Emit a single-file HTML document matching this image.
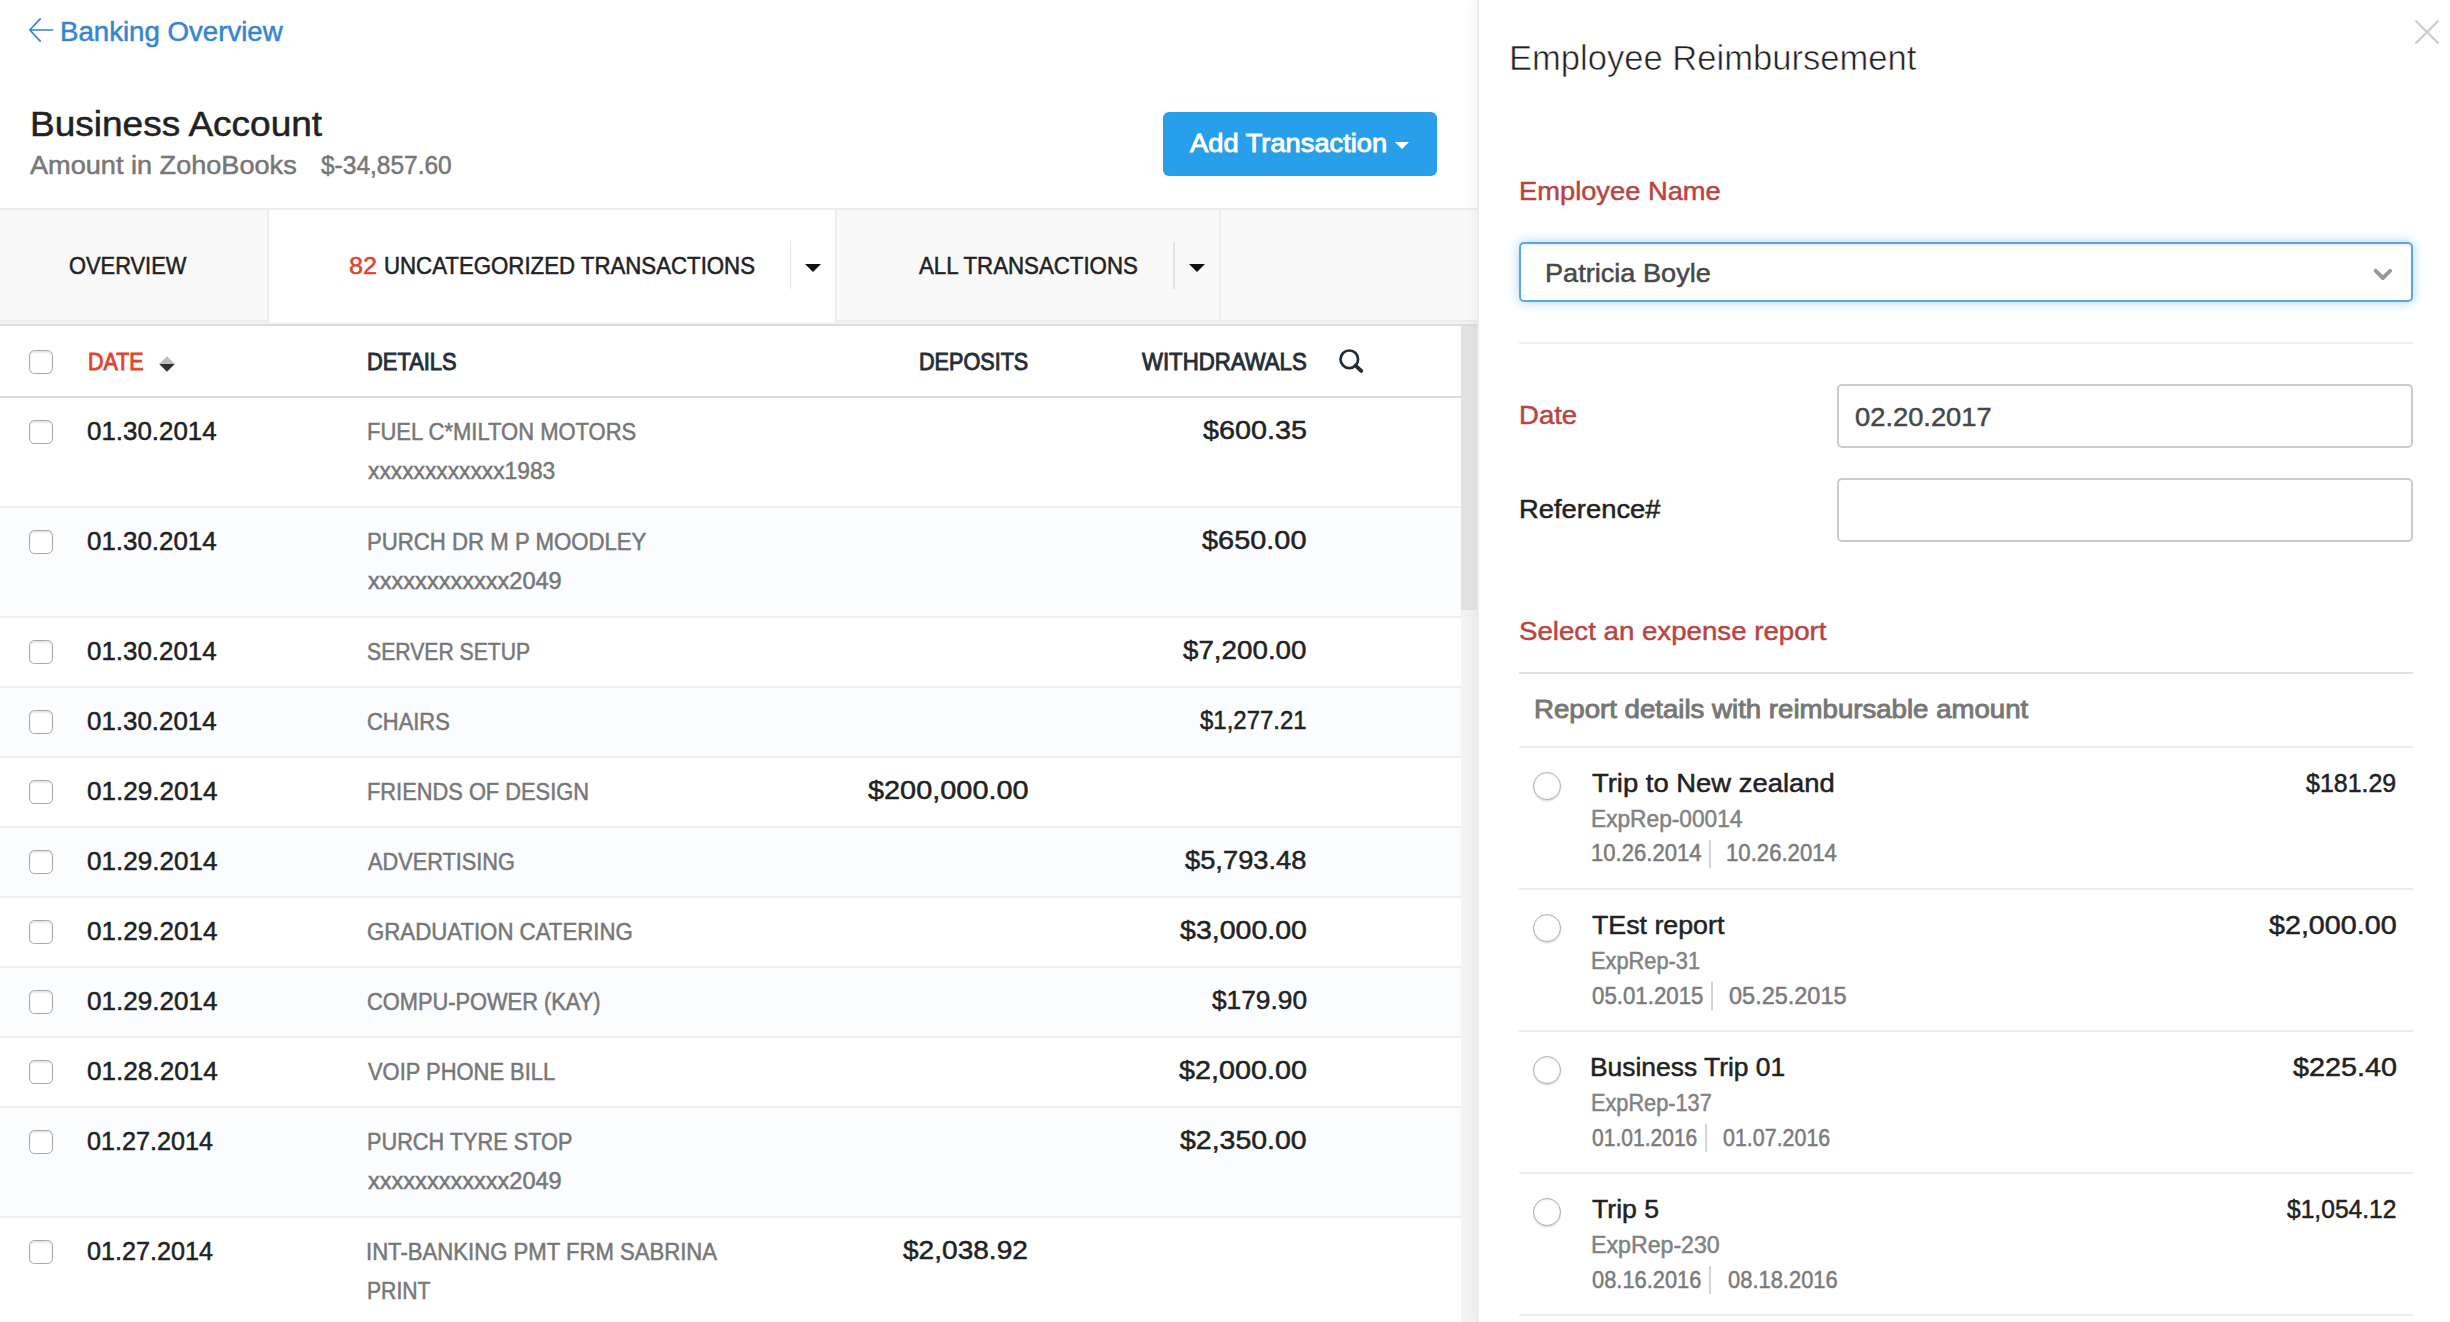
<!DOCTYPE html>
<html><head><meta charset="utf-8"><title>Business Account</title>
<style>
html,body{margin:0;padding:0;}
html{width:2450px;height:1322px;overflow:hidden;background:#fff;}
#r{position:absolute;left:0;top:0;width:2450px;height:1322px;overflow:hidden;}
body{width:2450px;height:1322px;position:relative;overflow:hidden;background:#fff;font-family:"Liberation Sans",sans-serif;}
#r>div,#r>svg,#r>span{position:absolute;display:block;}
#r>span{white-space:pre;line-height:1;transform-origin:0 0;}
</style></head><body><div id="r">
<svg style="left:26px;top:16px" width="30" height="28" viewBox="0 0 30 28"><path d="M26.6 14 H4 M14.2 2.9 L3.8 14 L14.2 25.1" fill="none" stroke="#3585d2" stroke-width="1.7" stroke-linecap="round" stroke-linejoin="round"/></svg>
<div style="left:1163px;top:112px;width:274px;height:64px;background:#27a0e9;border-radius:6px;"></div>
<div style="left:1395.4px;top:142.2px;width:0;height:0;border-left:7.7px solid transparent;border-right:7.7px solid transparent;border-top:7.8px solid #fff;"></div>
<div style="left:0px;top:208px;width:1477px;height:2px;background:#ececec;"></div>
<div style="left:0px;top:210px;width:1477px;height:110px;background:#f9f9f9;"></div>
<div style="left:0px;top:320px;width:1477px;height:2px;background:#ededed;"></div>
<div style="left:269px;top:210px;width:566px;height:112px;background:#fff;"></div>
<div style="left:267px;top:210px;width:2px;height:112px;background:#ededed;"></div>
<div style="left:835px;top:210px;width:2px;height:112px;background:#ededed;"></div>
<div style="left:1219px;top:210px;width:2px;height:112px;background:#ededed;"></div>
<div style="left:0px;top:322px;width:1477px;height:2px;background:#f4f4f4;"></div>
<div style="left:0px;top:324px;width:1477px;height:2px;background:#dddddd;"></div>
<div style="left:789.5px;top:242px;width:1.5px;height:47px;background:#e4e4e4;"></div>
<div style="left:1173px;top:242px;width:1.5px;height:47px;background:#e4e4e4;"></div>
<div style="left:805px;top:264px;width:0;height:0;border-left:8px solid transparent;border-right:8px solid transparent;border-top:8px solid #111;"></div>
<div style="left:1189px;top:264px;width:0;height:0;border-left:8px solid transparent;border-right:8px solid transparent;border-top:8px solid #111;"></div>
<div style="left:29px;top:350px;width:24px;height:24px;border:1.5px solid #a8a8a8;border-radius:5.5px;background:#fff;box-sizing:border-box;box-shadow:inset 0 1.5px 2px rgba(0,0,0,.12);"></div>
<svg style="left:158px;top:355px" width="18" height="18" viewBox="0 0 18 18"><path d="M9 1.3 L16.8 9 H1.2 Z" fill="#bdbdbd"/><path d="M9 16.8 L16.8 9 H1.2 Z" fill="#333"/></svg>
<svg style="left:1337px;top:347px" width="28" height="28" viewBox="0 0 28 28"><circle cx="12.3" cy="12.3" r="8.8" fill="none" stroke="#232d35" stroke-width="2.7"/><path d="M18.6 18.6 L24.2 23.9" stroke="#232d35" stroke-width="3.9" stroke-linecap="round"/></svg>
<div style="left:0px;top:396px;width:1461px;height:2px;background:#dcdcdc;"></div>
<div style="left:0px;top:506px;width:1461px;height:2px;background:#eeeeee;"></div>
<div style="left:29px;top:420px;width:24px;height:24px;border:1.5px solid #a8a8a8;border-radius:5.5px;background:#fff;box-sizing:border-box;box-shadow:inset 0 1.5px 2px rgba(0,0,0,.12);"></div>
<div style="left:0px;top:508px;width:1461px;height:108px;background:#fbfcfe;"></div>
<div style="left:0px;top:616px;width:1461px;height:2px;background:#eeeeee;"></div>
<div style="left:29px;top:530px;width:24px;height:24px;border:1.5px solid #a8a8a8;border-radius:5.5px;background:#fff;box-sizing:border-box;box-shadow:inset 0 1.5px 2px rgba(0,0,0,.12);"></div>
<div style="left:0px;top:686px;width:1461px;height:2px;background:#eeeeee;"></div>
<div style="left:29px;top:640px;width:24px;height:24px;border:1.5px solid #a8a8a8;border-radius:5.5px;background:#fff;box-sizing:border-box;box-shadow:inset 0 1.5px 2px rgba(0,0,0,.12);"></div>
<div style="left:0px;top:688px;width:1461px;height:68px;background:#fbfcfe;"></div>
<div style="left:0px;top:756px;width:1461px;height:2px;background:#eeeeee;"></div>
<div style="left:29px;top:710px;width:24px;height:24px;border:1.5px solid #a8a8a8;border-radius:5.5px;background:#fff;box-sizing:border-box;box-shadow:inset 0 1.5px 2px rgba(0,0,0,.12);"></div>
<div style="left:0px;top:826px;width:1461px;height:2px;background:#eeeeee;"></div>
<div style="left:29px;top:780px;width:24px;height:24px;border:1.5px solid #a8a8a8;border-radius:5.5px;background:#fff;box-sizing:border-box;box-shadow:inset 0 1.5px 2px rgba(0,0,0,.12);"></div>
<div style="left:0px;top:828px;width:1461px;height:68px;background:#fbfcfe;"></div>
<div style="left:0px;top:896px;width:1461px;height:2px;background:#eeeeee;"></div>
<div style="left:29px;top:850px;width:24px;height:24px;border:1.5px solid #a8a8a8;border-radius:5.5px;background:#fff;box-sizing:border-box;box-shadow:inset 0 1.5px 2px rgba(0,0,0,.12);"></div>
<div style="left:0px;top:966px;width:1461px;height:2px;background:#eeeeee;"></div>
<div style="left:29px;top:920px;width:24px;height:24px;border:1.5px solid #a8a8a8;border-radius:5.5px;background:#fff;box-sizing:border-box;box-shadow:inset 0 1.5px 2px rgba(0,0,0,.12);"></div>
<div style="left:0px;top:968px;width:1461px;height:68px;background:#fbfcfe;"></div>
<div style="left:0px;top:1036px;width:1461px;height:2px;background:#eeeeee;"></div>
<div style="left:29px;top:990px;width:24px;height:24px;border:1.5px solid #a8a8a8;border-radius:5.5px;background:#fff;box-sizing:border-box;box-shadow:inset 0 1.5px 2px rgba(0,0,0,.12);"></div>
<div style="left:0px;top:1106px;width:1461px;height:2px;background:#eeeeee;"></div>
<div style="left:29px;top:1060px;width:24px;height:24px;border:1.5px solid #a8a8a8;border-radius:5.5px;background:#fff;box-sizing:border-box;box-shadow:inset 0 1.5px 2px rgba(0,0,0,.12);"></div>
<div style="left:0px;top:1108px;width:1461px;height:108px;background:#fbfcfe;"></div>
<div style="left:0px;top:1216px;width:1461px;height:2px;background:#eeeeee;"></div>
<div style="left:29px;top:1130px;width:24px;height:24px;border:1.5px solid #a8a8a8;border-radius:5.5px;background:#fff;box-sizing:border-box;box-shadow:inset 0 1.5px 2px rgba(0,0,0,.12);"></div>
<div style="left:0px;top:1326px;width:1461px;height:2px;background:#eeeeee;"></div>
<div style="left:29px;top:1240px;width:24px;height:24px;border:1.5px solid #a8a8a8;border-radius:5.5px;background:#fff;box-sizing:border-box;box-shadow:inset 0 1.5px 2px rgba(0,0,0,.12);"></div>
<div style="left:1461px;top:326px;width:16px;height:996px;background:#f3f3f3;"></div>
<div style="left:1461px;top:326px;width:16px;height:284px;background:linear-gradient(90deg,#e0e0e0,#e5e5e5);"></div>
<div style="left:1477px;top:0px;width:973px;height:1322px;background:#fff;border-left:2px solid #ebebeb;box-sizing:border-box;box-shadow:-5px 0 8px rgba(0,0,0,.03);"></div>
<svg style="left:2413px;top:18px" width="28" height="28" viewBox="0 0 28 28"><path d="M3.2 3.2 L24.9 24.9 M24.9 3.2 L3.2 24.9" stroke="#cdcdcd" stroke-width="2.2" stroke-linecap="round"/></svg>
<div style="left:1519px;top:242px;width:894px;height:60px;border:2px solid #58a6ea;border-radius:5px;background:#fff;box-sizing:border-box;box-shadow:inset 0 2px 2px rgba(0,0,0,.06),0 0 12px rgba(102,175,233,.55);"></div>
<svg style="left:2371px;top:265px" width="24" height="20" viewBox="0 0 24 20"><path d="M4.7 5.9 L11.9 13 L19.1 5.9" fill="none" stroke="#999" stroke-width="3.9" stroke-linecap="round" stroke-linejoin="round"/></svg>
<div style="left:1519px;top:342px;width:894px;height:2px;background:#eeeeee;"></div>
<div style="left:1837px;top:384px;width:576px;height:64px;border:2px solid #cbcbcb;border-radius:5px;background:#fff;box-sizing:border-box;"></div>
<div style="left:1837px;top:478px;width:576px;height:64px;border:2px solid #cbcbcb;border-radius:5px;background:#fff;box-sizing:border-box;"></div>
<div style="left:1519px;top:672px;width:894px;height:2px;background:#e0e0e0;"></div>
<div style="left:1519px;top:746px;width:894px;height:2px;background:#ebebeb;"></div>
<div style="left:1533px;top:772.0px;width:28px;height:28px;border:1.5px solid #b0b0b0;border-radius:50%;background:#fff;box-sizing:border-box;box-shadow:0 1.5px 1.5px rgba(0,0,0,.13), inset 0 1px 2px rgba(0,0,0,.08);"></div>
<div style="left:1709.1px;top:840.2px;width:1.6px;height:27.5px;background:#d4d4d4;"></div>
<div style="left:1519px;top:888px;width:894px;height:2px;background:#ebebeb;"></div>
<div style="left:1533px;top:914.2px;width:28px;height:28px;border:1.5px solid #b0b0b0;border-radius:50%;background:#fff;box-sizing:border-box;box-shadow:0 1.5px 1.5px rgba(0,0,0,.13), inset 0 1px 2px rgba(0,0,0,.08);"></div>
<div style="left:1711.4px;top:982.4px;width:1.6px;height:27.5px;background:#d4d4d4;"></div>
<div style="left:1519px;top:1030px;width:894px;height:2px;background:#ebebeb;"></div>
<div style="left:1533px;top:1056.1px;width:28px;height:28px;border:1.5px solid #b0b0b0;border-radius:50%;background:#fff;box-sizing:border-box;box-shadow:0 1.5px 1.5px rgba(0,0,0,.13), inset 0 1px 2px rgba(0,0,0,.08);"></div>
<div style="left:1705.0px;top:1124.3px;width:1.6px;height:27.5px;background:#d4d4d4;"></div>
<div style="left:1519px;top:1172px;width:894px;height:2px;background:#ebebeb;"></div>
<div style="left:1533px;top:1198.2px;width:28px;height:28px;border:1.5px solid #b0b0b0;border-radius:50%;background:#fff;box-sizing:border-box;box-shadow:0 1.5px 1.5px rgba(0,0,0,.13), inset 0 1px 2px rgba(0,0,0,.08);"></div>
<div style="left:1709.1px;top:1266.4px;width:1.6px;height:27.5px;background:#d4d4d4;"></div>
<div style="left:1519px;top:1314px;width:894px;height:2px;background:#ebebeb;"></div>
<span style="top:19.01px;font-size:26.8px;color:#3585d2;-webkit-text-stroke:0.5px #3585d2;left:60.39px;transform:scaleX(1.0312);">Banking Overview</span>
<span style="top:106.57px;font-size:34.3px;color:#222222;-webkit-text-stroke:0.5px #222222;left:30.09px;transform:scaleX(1.0790);">Business Account</span>
<span style="top:151.89px;font-size:26px;color:#777777;-webkit-text-stroke:0.5px #777777;left:29.65px;transform:scaleX(1.0426);">Amount in ZohoBooks</span>
<span style="top:151.89px;font-size:26px;color:#777777;-webkit-text-stroke:0.5px #777777;left:321.25px;transform:scaleX(0.9420);">$-34,857.60</span>
<span style="top:130.02px;font-size:26.2px;color:#fff;-webkit-text-stroke:0.9px #fff;left:1189.85px;transform:scaleX(1.0422);">Add Transaction</span>
<span style="top:254.83px;font-size:23px;color:#222222;-webkit-text-stroke:0.5px #222222;left:68.90px;transform:scaleX(0.9500);">OVERVIEW</span>
<span style="top:254.83px;font-size:23px;color:#dc4630;-webkit-text-stroke:0.5px #dc4630;left:348.75px;transform:scaleX(1.0970);">82</span>
<span style="top:254.83px;font-size:23px;color:#222222;-webkit-text-stroke:0.5px #222222;left:383.68px;transform:scaleX(0.9667);">UNCATEGORIZED TRANSACTIONS</span>
<span style="top:254.83px;font-size:23px;color:#222222;-webkit-text-stroke:0.5px #222222;left:918.55px;transform:scaleX(0.9672);">ALL TRANSACTIONS</span>
<span style="top:351.13px;font-size:23px;color:#df452e;-webkit-text-stroke:0.9px #df452e;left:87.82px;transform:scaleX(0.9332);">DATE</span>
<span style="top:351.13px;font-size:23px;color:#242e36;-webkit-text-stroke:0.9px #242e36;left:367.30px;transform:scaleX(0.9514);">DETAILS</span>
<span style="top:351.13px;font-size:23px;color:#242e36;-webkit-text-stroke:0.9px #242e36;left:919.21px;transform:scaleX(0.9394);">DEPOSITS</span>
<span style="top:351.13px;font-size:23px;color:#242e36;-webkit-text-stroke:0.9px #242e36;left:1141.85px;transform:scaleX(0.9645);">WITHDRAWALS</span>
<span style="top:417.57px;font-size:26.5px;color:#222222;-webkit-text-stroke:0.5px #222222;left:87.07px;transform:scaleX(0.9779);">01.30.2014</span>
<span style="top:420.53px;font-size:23px;color:#777777;-webkit-text-stroke:0.5px #777777;left:366.89px;transform:scaleX(0.9563);">FUEL C*MILTON MOTORS</span>
<span style="top:460.13px;font-size:23px;color:#777777;-webkit-text-stroke:0.5px #777777;left:367.85px;transform:scaleX(0.9900);">xxxxxxxxxxxx1983</span>
<span style="top:417.37px;font-size:26.5px;color:#222222;-webkit-text-stroke:0.5px #222222;left:1202.95px;transform:scaleX(1.0847);">$600.35</span>
<span style="top:527.57px;font-size:26.5px;color:#222222;-webkit-text-stroke:0.5px #222222;left:87.07px;transform:scaleX(0.9779);">01.30.2014</span>
<span style="top:530.53px;font-size:23px;color:#777777;-webkit-text-stroke:0.5px #777777;left:366.89px;transform:scaleX(0.9645);">PURCH DR M P MOODLEY</span>
<span style="top:570.13px;font-size:23px;color:#777777;-webkit-text-stroke:0.5px #777777;left:367.85px;transform:scaleX(1.0240);">xxxxxxxxxxxx2049</span>
<span style="top:527.37px;font-size:26.5px;color:#222222;-webkit-text-stroke:0.5px #222222;left:1202.35px;transform:scaleX(1.0910);">$650.00</span>
<span style="top:637.57px;font-size:26.5px;color:#222222;-webkit-text-stroke:0.5px #222222;left:87.07px;transform:scaleX(0.9779);">01.30.2014</span>
<span style="top:640.53px;font-size:23px;color:#777777;-webkit-text-stroke:0.5px #777777;left:366.93px;transform:scaleX(0.9210);">SERVER SETUP</span>
<span style="top:637.37px;font-size:26.5px;color:#222222;-webkit-text-stroke:0.5px #222222;left:1183.35px;transform:scaleX(1.0473);">$7,200.00</span>
<span style="top:707.57px;font-size:26.5px;color:#222222;-webkit-text-stroke:0.5px #222222;left:87.07px;transform:scaleX(0.9779);">01.30.2014</span>
<span style="top:710.53px;font-size:23px;color:#777777;-webkit-text-stroke:0.5px #777777;left:366.90px;transform:scaleX(0.9525);">CHAIRS</span>
<span style="top:707.37px;font-size:26.5px;color:#222222;-webkit-text-stroke:0.5px #222222;left:1200.05px;transform:scaleX(0.9048);">$1,277.21</span>
<span style="top:777.57px;font-size:26.5px;color:#222222;-webkit-text-stroke:0.5px #222222;left:87.07px;transform:scaleX(0.9833);">01.29.2014</span>
<span style="top:780.53px;font-size:23px;color:#777777;-webkit-text-stroke:0.5px #777777;left:366.90px;transform:scaleX(0.9492);">FRIENDS OF DESIGN</span>
<span style="top:777.37px;font-size:26.5px;color:#222222;-webkit-text-stroke:0.5px #222222;left:867.75px;transform:scaleX(1.0898);">$200,000.00</span>
<span style="top:847.57px;font-size:26.5px;color:#222222;-webkit-text-stroke:0.5px #222222;left:87.07px;transform:scaleX(0.9833);">01.29.2014</span>
<span style="top:850.53px;font-size:23px;color:#777777;-webkit-text-stroke:0.5px #777777;left:367.85px;transform:scaleX(0.9450);">ADVERTISING</span>
<span style="top:847.37px;font-size:26.5px;color:#222222;-webkit-text-stroke:0.5px #222222;left:1185.35px;transform:scaleX(1.0303);">$5,793.48</span>
<span style="top:917.57px;font-size:26.5px;color:#222222;-webkit-text-stroke:0.5px #222222;left:87.07px;transform:scaleX(0.9833);">01.29.2014</span>
<span style="top:920.53px;font-size:23px;color:#777777;-webkit-text-stroke:0.5px #777777;left:366.88px;transform:scaleX(0.9657);">GRADUATION CATERING</span>
<span style="top:917.37px;font-size:26.5px;color:#222222;-webkit-text-stroke:0.5px #222222;left:1179.85px;transform:scaleX(1.0772);">$3,000.00</span>
<span style="top:987.57px;font-size:26.5px;color:#222222;-webkit-text-stroke:0.5px #222222;left:87.07px;transform:scaleX(0.9833);">01.29.2014</span>
<span style="top:990.53px;font-size:23px;color:#777777;-webkit-text-stroke:0.5px #777777;left:366.90px;transform:scaleX(0.9488);">COMPU-POWER (KAY)</span>
<span style="top:987.37px;font-size:26.5px;color:#222222;-webkit-text-stroke:0.5px #222222;left:1211.75px;transform:scaleX(0.9921);">$179.90</span>
<span style="top:1057.57px;font-size:26.5px;color:#222222;-webkit-text-stroke:0.5px #222222;left:87.06px;transform:scaleX(0.9863);">01.28.2014</span>
<span style="top:1060.53px;font-size:23px;color:#777777;-webkit-text-stroke:0.5px #777777;left:367.85px;transform:scaleX(0.9530);">VOIP PHONE BILL</span>
<span style="top:1057.37px;font-size:26.5px;color:#222222;-webkit-text-stroke:0.5px #222222;left:1178.95px;transform:scaleX(1.0849);">$2,000.00</span>
<span style="top:1127.57px;font-size:26.5px;color:#222222;-webkit-text-stroke:0.5px #222222;left:87.10px;transform:scaleX(0.9504);">01.27.2014</span>
<span style="top:1130.53px;font-size:23px;color:#777777;-webkit-text-stroke:0.5px #777777;left:366.91px;transform:scaleX(0.9434);">PURCH TYRE STOP</span>
<span style="top:1170.13px;font-size:23px;color:#777777;-webkit-text-stroke:0.5px #777777;left:367.85px;transform:scaleX(1.0240);">xxxxxxxxxxxx2049</span>
<span style="top:1127.37px;font-size:26.5px;color:#222222;-webkit-text-stroke:0.5px #222222;left:1180.25px;transform:scaleX(1.0738);">$2,350.00</span>
<span style="top:1237.57px;font-size:26.5px;color:#222222;-webkit-text-stroke:0.5px #222222;left:87.10px;transform:scaleX(0.9504);">01.27.2014</span>
<span style="top:1240.53px;font-size:23px;color:#777777;-webkit-text-stroke:0.5px #777777;left:365.93px;transform:scaleX(0.9617);">INT-BANKING PMT FRM SABRINA</span>
<span style="top:1280.13px;font-size:23px;color:#777777;-webkit-text-stroke:0.5px #777777;left:366.93px;transform:scaleX(0.9198);">PRINT</span>
<span style="top:1237.37px;font-size:26.5px;color:#222222;-webkit-text-stroke:0.5px #222222;left:903.45px;transform:scaleX(1.0593);">$2,038.92</span>
<span style="top:40.93px;font-size:35.4px;color:#222;-webkit-text-stroke:0.6px #fff;left:1509.45px;transform:scaleX(0.9770);">Employee Reimbursement</span>
<span style="top:177.89px;font-size:26px;color:#b94542;-webkit-text-stroke:0.5px #b94542;left:1518.85px;transform:scaleX(1.0499);">Employee Name</span>
<span style="top:259.54px;font-size:26.3px;color:#484848;-webkit-text-stroke:0.5px #484848;left:1544.79px;transform:scaleX(1.0313);">Patricia Boyle</span>
<span style="top:402.02px;font-size:26.2px;color:#b94542;-webkit-text-stroke:0.5px #b94542;left:1518.55px;transform:scaleX(1.0521);">Date</span>
<span style="top:403.57px;font-size:26.5px;color:#484848;-webkit-text-stroke:0.5px #484848;left:1854.82px;transform:scaleX(1.0306);">02.20.2017</span>
<span style="top:496.22px;font-size:26.2px;color:#222222;-webkit-text-stroke:0.5px #222222;left:1518.56px;transform:scaleX(1.0454);">Reference#</span>
<span style="top:618.05px;font-size:26.4px;color:#b94542;-webkit-text-stroke:0.5px #b94542;left:1518.80px;transform:scaleX(1.0478);">Select an expense report</span>
<span style="top:697.24px;font-size:25px;color:#777777;-webkit-text-stroke:0.9px #777777;left:1534.24px;transform:scaleX(1.1046);">Report details with reimbursable amount</span>
<span style="top:769.82px;font-size:26.2px;color:#222222;-webkit-text-stroke:0.5px #222222;left:1592.05px;transform:scaleX(1.0471);">Trip to New zealand</span>
<span style="top:769.57px;font-size:26.5px;color:#222222;-webkit-text-stroke:0.5px #222222;left:2306.25px;transform:scaleX(0.9416);">$181.29</span>
<span style="top:808.25px;font-size:23.1px;color:#828282;-webkit-text-stroke:0.5px #828282;left:1591.07px;transform:scaleX(0.9829);">ExpRep-00014</span>
<span style="top:842.45px;font-size:23.1px;color:#7b7b7b;-webkit-text-stroke:0.5px #7b7b7b;left:1590.89px;transform:scaleX(0.9561);">10.26.2014</span>
<span style="top:842.45px;font-size:23.1px;color:#7b7b7b;-webkit-text-stroke:0.5px #7b7b7b;left:1726.29px;transform:scaleX(0.9596);">10.26.2014</span>
<span style="top:912.02px;font-size:26.2px;color:#222222;-webkit-text-stroke:0.5px #222222;left:1592.05px;transform:scaleX(1.0219);">TEst report</span>
<span style="top:911.77px;font-size:26.5px;color:#222222;-webkit-text-stroke:0.5px #222222;left:2268.95px;transform:scaleX(1.0823);">$2,000.00</span>
<span style="top:950.45px;font-size:23.1px;color:#828282;-webkit-text-stroke:0.5px #828282;left:1591.11px;transform:scaleX(0.9438);">ExpRep-31</span>
<span style="top:984.65px;font-size:23.1px;color:#7b7b7b;-webkit-text-stroke:0.5px #7b7b7b;left:1591.85px;transform:scaleX(0.9639);">05.01.2015</span>
<span style="top:984.65px;font-size:23.1px;color:#7b7b7b;-webkit-text-stroke:0.5px #7b7b7b;left:1729.25px;transform:scaleX(1.0171);">05.25.2015</span>
<span style="top:1053.92px;font-size:26.2px;color:#222222;-webkit-text-stroke:0.5px #222222;left:1590.03px;transform:scaleX(1.0083);">Business Trip 01</span>
<span style="top:1053.67px;font-size:26.5px;color:#222222;-webkit-text-stroke:0.5px #222222;left:2292.65px;transform:scaleX(1.0847);">$225.40</span>
<span style="top:1092.35px;font-size:23.1px;color:#828282;-webkit-text-stroke:0.5px #828282;left:1591.11px;transform:scaleX(0.9404);">ExpRep-137</span>
<span style="top:1126.55px;font-size:23.1px;color:#7b7b7b;-webkit-text-stroke:0.5px #7b7b7b;left:1591.85px;transform:scaleX(0.9108);">01.01.2016</span>
<span style="top:1126.55px;font-size:23.1px;color:#7b7b7b;-webkit-text-stroke:0.5px #7b7b7b;left:1723.15px;transform:scaleX(0.9282);">01.07.2016</span>
<span style="top:1196.02px;font-size:26.2px;color:#222222;-webkit-text-stroke:0.5px #222222;left:1592.05px;transform:scaleX(1.0168);">Trip 5</span>
<span style="top:1195.77px;font-size:26.5px;color:#222222;-webkit-text-stroke:0.5px #222222;left:2286.95px;transform:scaleX(0.9287);">$1,054.12</span>
<span style="top:1234.45px;font-size:23.1px;color:#828282;-webkit-text-stroke:0.5px #828282;left:1591.05px;transform:scaleX(1.0029);">ExpRep-230</span>
<span style="top:1268.65px;font-size:23.1px;color:#7b7b7b;-webkit-text-stroke:0.5px #7b7b7b;left:1591.85px;transform:scaleX(0.9465);">08.16.2016</span>
<span style="top:1268.65px;font-size:23.1px;color:#7b7b7b;-webkit-text-stroke:0.5px #7b7b7b;left:1727.55px;transform:scaleX(0.9491);">08.18.2016</span>
</div></body></html>
